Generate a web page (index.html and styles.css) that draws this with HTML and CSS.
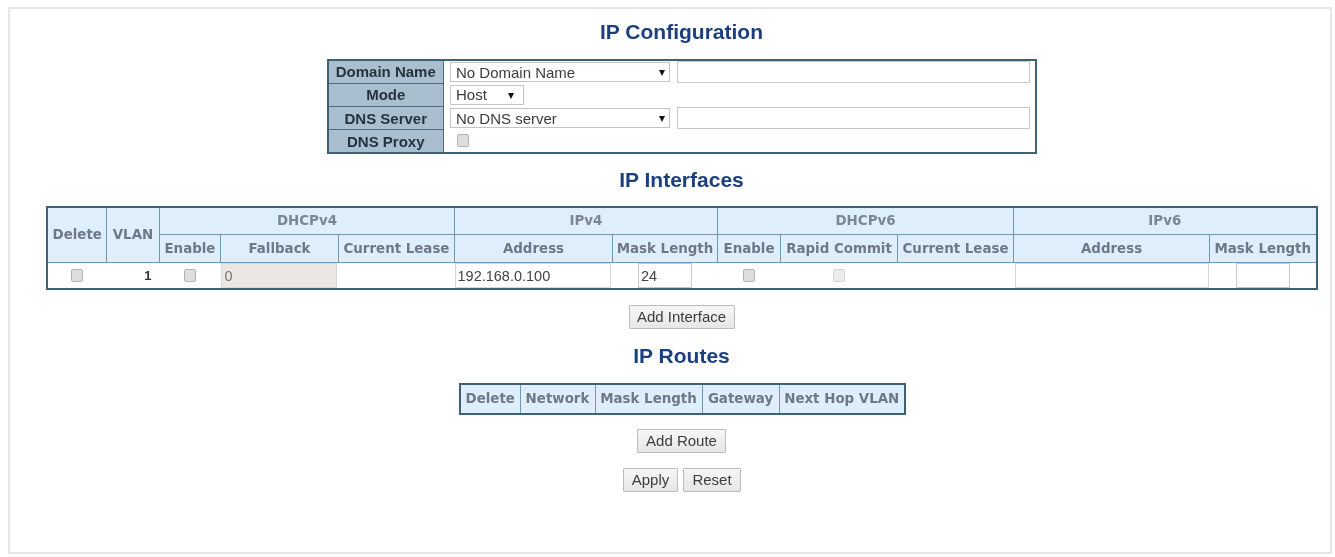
FILE: index.html
```html
<!DOCTYPE html>
<html lang="en">
<head>
<meta charset="utf-8">
<title>IP Configuration</title>
<link rel="stylesheet" href="styles.css">
</head>
<body>
<main class="frame">
  <h1 class="title title-first">IP Configuration</h1>
  <table class="config">
    <tr>
      <th>Domain Name</th>
      <td><div class="field-row"><span class="sel-wrap sel-wide"><select class="sel"><option>No Domain Name</option></select></span><input class="text text-long" type="text"></div></td>
    </tr>
    <tr>
      <th>Mode</th>
      <td><div class="field-row"><span class="sel-wrap sel-short"><select class="sel"><option>Host</option></select></span></div></td>
    </tr>
    <tr>
      <th>DNS Server</th>
      <td><div class="field-row"><span class="sel-wrap sel-wide"><select class="sel"><option>No DNS server</option></select></span><input class="text text-long" type="text"></div></td>
    </tr>
    <tr>
      <th>DNS Proxy</th>
      <td><div class="field-row"><input class="check check-proxy" type="checkbox"></div></td>
    </tr>
  </table>

  <h1 class="title title-if">IP Interfaces</h1>
  <table class="grid interfaces">
    <colgroup>
      <col class="c59"><col class="c53"><col class="c61"><col class="c118"><col class="c116"><col class="c158"><col class="c105"><col class="c63"><col class="c117"><col class="c116"><col class="c196"><col class="c107">
    </colgroup>
    <tr class="head-top">
      <th rowspan="2" class="head-span">Delete</th>
      <th rowspan="2" class="head-span">VLAN</th>
      <th colspan="3">DHCPv4</th>
      <th colspan="2">IPv4</th>
      <th colspan="3">DHCPv6</th>
      <th colspan="2">IPv6</th>
    </tr>
    <tr class="head-sub">
      <th>Enable</th><th>Fallback</th><th>Current Lease</th>
      <th>Address</th><th>Mask Length</th>
      <th>Enable</th><th>Rapid Commit</th><th>Current Lease</th>
      <th>Address</th><th>Mask Length</th>
    </tr>
    <tr class="data">
      <td class="center"><input class="check" type="checkbox"></td>
      <td class="vlan">1</td>
      <td class="center"><input class="check" type="checkbox"></td>
      <td class="flush"><input class="text text-fill text-disabled" type="text" value="0" disabled></td>
      <td></td>
      <td class="flush flush-addr"><input class="text text-fill" type="text" value="192.168.0.100"></td>
      <td class="center"><input class="text text-mask" type="text" value="24"></td>
      <td class="center"><input class="check" type="checkbox"></td>
      <td class="center"><input class="check check-off" type="checkbox" disabled></td>
      <td></td>
      <td class="flush"><input class="text text-fill" type="text"></td>
      <td class="center"><input class="text text-mask" type="text"></td>
    </tr>
  </table>

  <button class="btn btn-interface" type="button">Add Interface</button>

  <h1 class="title title-routes">IP Routes</h1>
  <table class="grid routes">
    <tr class="head-route">
      <th>Delete</th><th>Network</th><th>Mask Length</th><th>Gateway</th><th>Next Hop VLAN</th>
    </tr>
  </table>

  <button class="btn btn-route" type="button">Add Route</button>

  <div class="actions">
    <button class="btn btn-apply" type="button">Apply</button>
    <button class="btn btn-reset" type="button">Reset</button>
  </div>
</main>
</body>
</html>
```
FILE: styles.css
```css
* { box-sizing: border-box; }
html, body { margin: 0; background: #fff; }
body { padding: 7px 3px 3px 8px; height: 557px; overflow: hidden; }

.frame {
  height: 547px;
  border: 2px solid #e6e6e6;
  padding: 0 0 0 23px;
  display: flex;
  flex-direction: column;
  align-items: center;
  font-family: "Liberation Sans", Arial, sans-serif;
  filter: blur(0.6px);
}

.title {
  margin: 0;
  font-size: 21px;
  line-height: 24px;
  font-weight: 700;
  color: #1c3f7f;
}
.title-first { margin-top: 11px; }
.title-if { margin-top: 14px; }
.title-routes { margin-top: 15px; }

table { border-collapse: collapse; table-layout: fixed; }

.config {
  width: 710px;
  margin-top: 15px;
  border: 2px solid #3d6278;
}
.config th {
  width: 116px;
  height: 23.25px;
  padding: 0;
  background: #a9bfd0;
  border-top: 1px solid #4b6a7e;
  border-right: 1px solid #4b6a7e;
  color: #26323e;
  font-size: 15px;
  font-weight: 700;
  text-align: center;
}
.config tr:first-child th { border-top: 0; }
.config td { padding: 0 0 0 6px; background: #fff; }

.field-row { display: flex; align-items: center; gap: 7px; }

.sel-wrap { position: relative; display: block; height: 20px; }
.sel-wrap::after {
  content: "";
  position: absolute;
  top: 8px;
  border-top: 6px solid #111;
  border-left: 3px solid transparent;
  border-right: 3px solid transparent;
}
.sel-wide { width: 220px; }
.sel-wide::after { right: 5px; }
.sel-short { width: 74px; }
.sel-short::after { right: 10px; }

.sel {
  appearance: none;
  display: block;
  width: 100%;
  height: 20px;
  padding: 0 0 0 5px;
  background: #fff;
  border: 1px solid #c4c4c4;
  border-radius: 0;
  color: #3c3c3c;
  font: 15px "Liberation Sans", Arial, sans-serif;
}

.text {
  height: 22px;
  padding: 0 2px;
  background: #fff;
  border: 1px solid #c9c9c9;
  border-radius: 0;
  color: #444;
  font: 14.5px "Liberation Sans", Arial, sans-serif;
}
.text-long { width: 353px; }
.text-fill { display: block; width: 100%; height: 25px; padding-top: 2px; border-color: #d8d8d8; }
.text-disabled { background: #e9e7df; color: #777; }
.text-mask { display: block; width: 54px; height: 25px; margin: 0 auto; padding-top: 2px; }

.check {
  appearance: none;
  display: block;
  width: 12px;
  height: 13px;
  margin: 0 auto;
  background: #dedede;
  border: 1px solid #b4b4b4;
  border-radius: 2px;
}
.check-proxy { margin: 0 0 0 7px; }
.check-off { background: #ececec; border-color: #d6d6d6; }

.grid {
  border: 2px solid #3d6278;
  font-family: "DejaVu Sans", Verdana, sans-serif;
}
.grid th {
  padding: 0;
  background: #deeefb;
  border: 1px solid #6f98b4;
  color: #6d7888;
  font-size: 13.4px;
  font-weight: 700;
  text-align: center;
  white-space: nowrap;
}

.interfaces { width: 1269px; margin-top: 14px; margin-left: 1px; }
.head-top th { height: 27px; color: #7b8695; }
.head-top .head-span, .head-sub th { color: #6d7888; }
.head-sub th { height: 28px; }
.data td {
  height: 26px;
  padding: 0;
  background: #fff;
  color: #333;
  font-size: 13px;
}
.data .center { text-align: center; }
.data .flush { padding: 0 1px; }
.data .flush-addr { padding: 0 2px 0 0; }
.data .vlan { padding-right: 8px; text-align: right; font-weight: 700; font-family: "Liberation Sans", Arial, sans-serif; }

.c59 { width: 59px; }
.c53 { width: 53px; }
.c61 { width: 61px; }
.c118 { width: 118px; }
.c116 { width: 116px; }
.c158 { width: 158px; }
.c105 { width: 105px; }
.c63 { width: 63px; }
.c117 { width: 117px; }
.c196 { width: 196px; }
.c107 { width: 107px; }

.routes { margin-top: 15px; margin-left: 2px; }
.head-route th { height: 30px; padding: 0; }
.head-route th:nth-child(1) { width: 60px; }
.head-route th:nth-child(2) { width: 75px; }
.head-route th:nth-child(3) { width: 107px; }
.head-route th:nth-child(4) { width: 77px; }
.head-route th:nth-child(5) { width: 126px; }

.btn {
  height: 24px;
  padding: 0;
  background: linear-gradient(#f6f6f6, #e6e6e6);
  border: 1px solid #bcbcbc;
  border-radius: 1px;
  color: #3d3d3d;
  font: 15px "Liberation Sans", Arial, sans-serif;
}
.btn-interface { width: 106px; margin-top: 15px; }
.btn-route { width: 89px; margin-top: 14px; }
.btn-apply { width: 55px; }
.btn-reset { width: 58px; }
.actions { display: flex; gap: 5px; margin-top: 15px; margin-left: 1px; }
```
